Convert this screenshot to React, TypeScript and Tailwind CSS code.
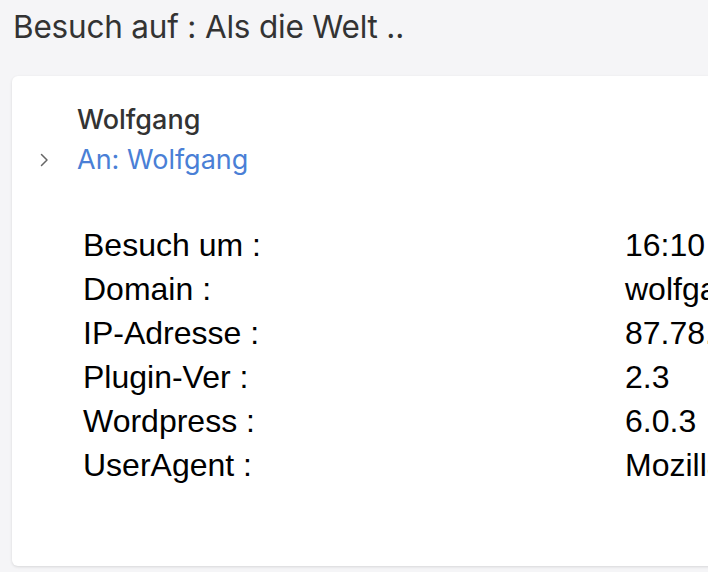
import React from "react";

const rows: [string, string][] = [
  ["Besuch um :", "16:10 Uhr"],
  ["Domain :", "wolfgang-example.de"],
  ["IP-Adresse :", "87.78.112.45"],
  ["Plugin-Ver :", "2.3"],
  ["Wordpress :", "6.0.3"],
  ["UserAgent :", "Mozilla/5.0 (Macintosh; Intel Mac OS X 10_15_7)"],
];

export default function App() {
  return (
    <div
      className="h-[572px] w-[708px] overflow-hidden bg-[#f5f5f7]"
      style={{ fontFamily: "Inter, 'Noto Sans', sans-serif" }}
    >
      <h1 className="pl-[13px] pt-[8px] text-[31.5px] leading-[38px] font-normal text-[#333333] tracking-[-0.2px]">
        Besuch auf : Als die Welt ..
      </h1>

      <div className="ml-[12px] mt-[30px] h-[490px] w-[800px] rounded-[6px] bg-white shadow-[0_1px_3px_rgba(0,0,0,0.12)]">
        <div className="flex pt-[24px]">
          {/* chevron column */}
          <div className="flex w-[65px] flex-col">
            <div className="h-[40px]" />
            <div className="flex h-[40px] items-center pl-[27px]">
              <svg width="11" height="16" viewBox="0 0 11 16" fill="none">
                <path d="M2.5 2.5L8 8L2.5 13.5" stroke="#666" strokeWidth="1.5" strokeLinecap="round" strokeLinejoin="round" />
              </svg>
            </div>
          </div>
          <div className="flex flex-col">
            <div className="h-[40px] text-[27px] font-medium leading-[40px] text-[#333333]">Wolfgang</div>
            <div className="h-[40px] text-[27px] leading-[40px] text-[#4a7fd6]">An: Wolfgang</div>
          </div>
        </div>

        <div
          className="mt-[43px] ml-[71px] flex flex-col"
          style={{ fontFamily: "'Liberation Sans', Arial, sans-serif" }}
        >
          {rows.map(([k, v]) => (
            <div key={k} className="flex h-[44px] items-center text-[32px] text-black">
              <span className="w-[542px] shrink-0">{k}</span>
              <span className="whitespace-nowrap">{v}</span>
            </div>
          ))}
        </div>
      </div>
    </div>
  );
}
